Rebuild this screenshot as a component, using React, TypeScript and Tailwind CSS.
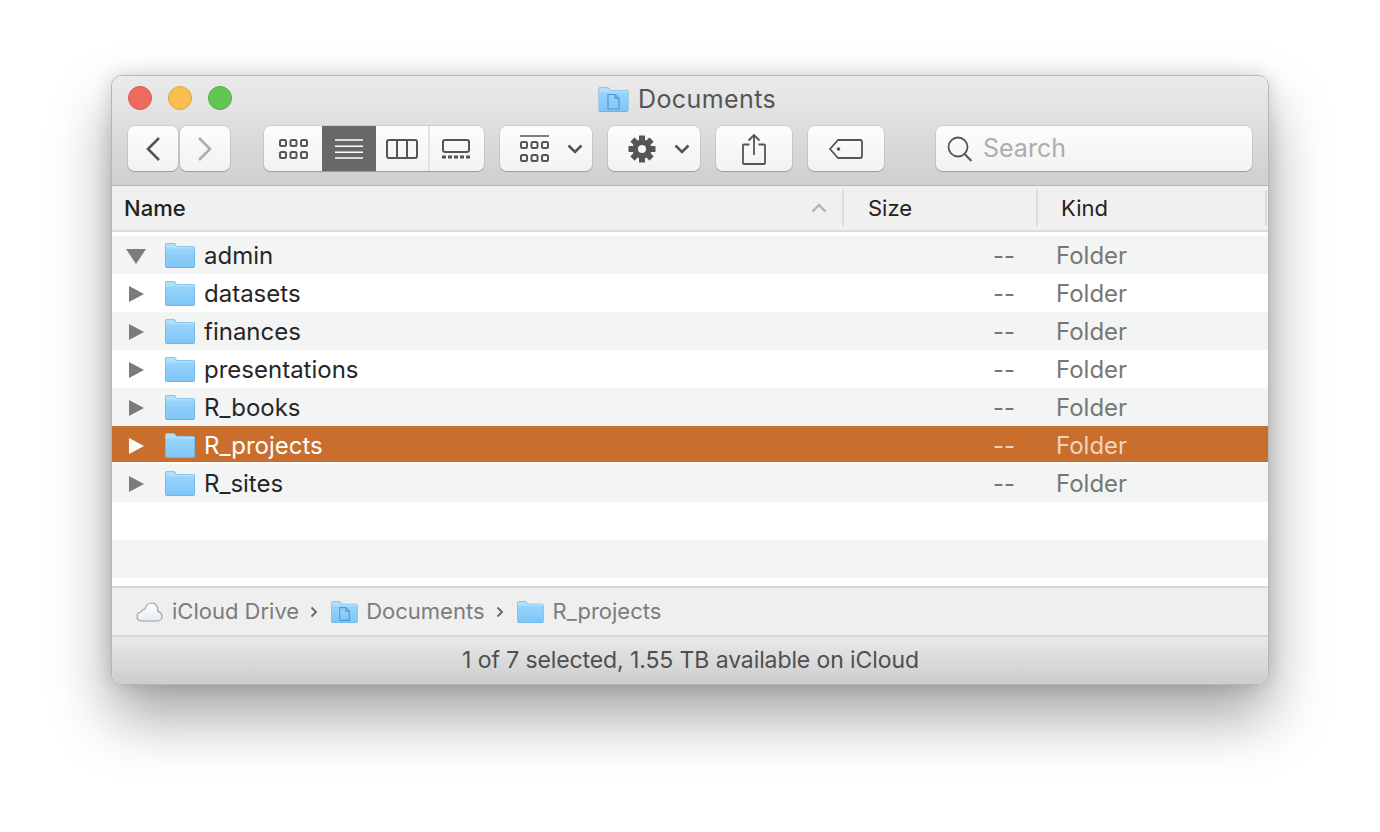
import React from "react";

const rows = [
  { name: "admin", open: true },
  { name: "datasets" },
  { name: "finances" },
  { name: "presentations" },
  { name: "R_books" },
  { name: "R_projects", selected: true },
  { name: "R_sites" },
];

function Folder({ doc = false, className = "w-[30px] h-[25px]" }: { doc?: boolean; className?: string }) {
  const id = doc ? "fd" : "fp";
  return (
    <svg viewBox="0 0 30 25" className={className}>
      <defs>
        <linearGradient id={id} x1="0" y1="0" x2="0" y2="1">
          <stop offset="0" stopColor="#97d4fb" />
          <stop offset="1" stopColor="#7ec5f7" />
        </linearGradient>
      </defs>
      <path d="M0 2.2C0 .9.8 0 2 0h6.2c1 0 1.6.4 2.2 1.1L11.8 3H28c1.2 0 2 .8 2 2v18c0 1.2-.8 2-2 2H2c-1.2 0-2-.8-2-2z" fill="#68aee0" />
      <path d="M.6 2.2C.6 1.2 1.2.6 2 .6h6.2c.8 0 1.3.3 1.8.9L11.5 3.6H28c.9 0 1.4.5 1.4 1.4v1H.6z" fill="#aedffb" />
      <path d="M.6 5.6h28.8V23c0 .9-.5 1.3-1.4 1.3H2c-.9 0-1.4-.4-1.4-1.3z" fill={`url(#${id})`} />
      {doc && (
        <path d="M9.500 7.500h7l4 4V22h-11zM16.500 7.500v4h4" fill="none" stroke="#4f97d6" strokeWidth="1.200" />
      )}
    </svg>
  );
}

function Tri({ open, selected }: { open?: boolean; selected?: boolean }) {
  return open ? (
    <svg viewBox="0 0 20 16" className="w-[20px] h-[16px]">
      <path d="M0 1h20L10 16z" fill="#7b7b7b" />
    </svg>
  ) : (
    <svg viewBox="0 0 16 16" className="w-[16px] h-[16px]">
      <path d="M1 0l15 8-15 8z" fill={selected ? "#ffffff" : "#7b7b7b"} />
    </svg>
  );
}

const btn =
  "h-[45px] flex items-center justify-center rounded-[7px] bg-gradient-to-b from-[#fdfdfd] to-[#f2f2f2] shadow-[0_0_0_1px_rgba(0,0,0,0.07),0_1px_1px_rgba(0,0,0,0.22)]";

const ic = "#555555";

function Chevron() {
  return (
    <svg viewBox="0 0 16 10" className="w-[16px] h-[10px]">
      <path d="M1.500 1.500L8 8l6.500-6.500" fill="none" stroke={ic} strokeWidth="2.600" />
    </svg>
  );
}

function SmallSquares({ y }: { y: number }) {
  return (
    <>
      {[0, 10.500, 21].map((x) => (
        <rect key={x} x={x + 1} y={y} width="6" height="6" rx="1.500" fill="none" stroke={ic} strokeWidth="2" />
      ))}
    </>
  );
}

function Crumb() {
  return (
    <svg viewBox="0 0 8 12" className="w-[8px] h-[12px] ml-[11px]">
      <path d="M1.500 1.500L6 6l-4.500 4.500" fill="none" stroke="#666" strokeWidth="1.800" />
    </svg>
  );
}

export default function App() {
  return (
    <div className="w-[1380px] h-[832px] bg-white pt-[75px] pl-[111px] font-['Inter','Liberation_Sans',sans-serif] overflow-hidden">
      <div className="w-[1158px] h-[610px] rounded-[11px] border border-[#b5b5b5] overflow-hidden flex flex-col shadow-[0_32px_60px_rgba(0,0,0,0.36),0_0_18px_rgba(0,0,0,0.14)] bg-white">
        {/* Title + toolbar */}
        <div className="h-[110px] shrink-0 bg-gradient-to-b from-[#ebebeb] to-[#cfcfcf] border-b border-[#b4b4b4] flex flex-col">
          <div className="relative h-[50px] shrink-0 flex items-start pt-[10px] pl-[16px] gap-[16px]">
            <div className="w-[24px] h-[24px] rounded-full bg-[#ee6a5f] border border-[#d9574d]" />
            <div className="w-[24px] h-[24px] rounded-full bg-[#f6bf4f] border border-[#e0a63b]" />
            <div className="w-[24px] h-[24px] rounded-full bg-[#62c554] border border-[#52ae45]" />
            <div className="absolute left-[486px] top-[9px] flex items-center gap-[9px]">
              <Folder doc className="w-[31px] h-[25px]" />
              <span className="text-[25px] leading-[28px] text-[#555] tracking-[0.4px]">Documents</span>
            </div>
          </div>
          <div className="flex pl-[16px]">
            <button className={`${btn} w-[50px]`}>
              <svg viewBox="0 0 16 26" className="w-[16px] h-[26px]">
                <path d="M14 2L3 13l11 11" fill="none" stroke={ic} strokeWidth="2.600" />
              </svg>
            </button>
            <button className={`${btn} w-[50px] ml-[2px]`}>
              <svg viewBox="0 0 16 26" className="w-[16px] h-[26px]">
                <path d="M2 2l11 11L2 24" fill="none" stroke="#adadad" strokeWidth="2.600" />
              </svg>
            </button>
            <div className={`${btn} w-[220px] ml-[34px] overflow-hidden !justify-start`}>
              <div className="w-[58px] h-full flex items-center justify-center">
                <svg viewBox="0 0 29 20" className="w-[29px] h-[20px]">
                  <SmallSquares y={1} />
                  <SmallSquares y={13} />
                </svg>
              </div>
              <div className="w-[54px] h-full bg-[#686868] flex items-center justify-center">
                <svg viewBox="0 0 28 20" className="w-[28px] h-[20px]">
                  <path d="M0 1h28M0 7.300h28M0 13.300h28M0 19h28" stroke="#fff" strokeWidth="1.600" />
                </svg>
              </div>
              <div className="w-[54px] h-full flex items-center justify-center border-r-2 border-[#e3e3e3]">
                <svg viewBox="0 0 32 20" className="w-[32px] h-[20px]">
                  <rect x="1" y="1" width="30" height="18" rx="2" fill="none" stroke={ic} strokeWidth="2" />
                  <path d="M11 1v18M21 1v18" stroke={ic} strokeWidth="2" />
                </svg>
              </div>
              <div className="flex-1 h-full flex items-center justify-center pr-[2px]">
                <svg viewBox="0 0 28 20" className="w-[28px] h-[20px]">
                  <rect x="1" y="1" width="26" height="12" rx="2" fill="none" stroke={ic} strokeWidth="2" />
                  <path d="M0 18h4M6 18h4M12 18h4M18 18h4M24 18h4" stroke={ic} strokeWidth="3" />
                </svg>
              </div>
            </div>
            <button className={`${btn} w-[92px] ml-[16px] gap-[18px] pl-[10px]`}>
              <svg viewBox="0 0 29 28" className="w-[29px] h-[28px]">
                <path d="M0 1h29" stroke={ic} strokeWidth="1.600" />
                <SmallSquares y={7} />
                <SmallSquares y={20} />
              </svg>
              <Chevron />
            </button>
            <button className={`${btn} w-[92px] ml-[16px] gap-[18px] pl-[10px]`}>
              <svg viewBox="0 0 28 28" className="w-[28px] h-[28px]">
                <g fill={ic}>
                  <circle cx="14" cy="14" r="9.500" />
                  {[0, 45, 90, 135, 180, 225, 270, 315].map((a) => (
                    <rect key={a} x="11" y="0.500" width="6" height="6" rx="0.500" transform={`rotate(${a} 14 14)`} />
                  ))}
                </g>
                <circle cx="14" cy="14" r="4" fill="#f8f8f8" />
              </svg>
              <Chevron />
            </button>
            <button className={`${btn} w-[76px] ml-[16px]`}>
              <svg viewBox="0 0 24 32" className="w-[24px] h-[32px]">
                <path d="M7.500 11.500H2a1 1 0 0 0-1 1V30a1 1 0 0 0 1 1h20a1 1 0 0 0 1-1V12.500a1 1 0 0 0-1-1h-5.500" fill="none" stroke={ic} strokeWidth="1.800" />
                <path d="M12 22V2M6.500 7.500L12 2l5.500 5.500" fill="none" stroke={ic} strokeWidth="1.800" />
              </svg>
            </button>
            <button className={`${btn} w-[76px] ml-[16px]`}>
              <svg viewBox="0 0 34 20" className="w-[34px] h-[20px]">
                <path d="M9 1h22a2 2 0 0 1 2 2v14a2 2 0 0 1-2 2H9l-8-9z" fill="none" stroke={ic} strokeWidth="1.800" strokeLinejoin="round" />
                <circle cx="9.500" cy="10" r="1.800" fill={ic} />
              </svg>
            </button>
            <div className={`${btn} w-[316px] ml-[52px] !justify-start pl-[11px] gap-[10px]`}>
              <svg viewBox="0 0 26 26" className="w-[26px] h-[26px]">
                <circle cx="11" cy="11" r="9.500" fill="none" stroke={ic} strokeWidth="1.800" />
                <path d="M17.500 18l7 7" stroke={ic} strokeWidth="2" />
              </svg>
              <span className="text-[25px] text-[#adadad]">Search</span>
            </div>
          </div>
        </div>

        {/* Column header */}
        <div className="h-[46px] shrink-0 bg-[#f0f0f0] border-b-2 border-[#dcdcdc] flex items-center text-[22px] text-[#222] font-medium">
          <div className="w-[730px] pl-[12px] flex items-center justify-between pr-[15px] h-[36px]">
            <span>Name</span>
            <svg viewBox="0 0 16 10" className="w-[16px] h-[10px]">
              <path d="M1.500 8.500L8 2l6.500 6.500" fill="none" stroke="#b0b0b0" strokeWidth="2.200" />
            </svg>
          </div>
          <div className="w-[194px] h-[36px] border-l-2 border-[#dcdcdc] pl-[24px] flex items-center font-normal">Size</div>
          <div className="flex-1 h-[36px] border-l-2 border-[#dcdcdc] pl-[23px] flex items-center font-normal">Kind</div>
          <div className="w-[2px] h-[36px] bg-[#dcdcdc] mr-[1px]" />
        </div>

        {/* List */}
        <div className="flex-1 bg-white pt-[4px] flex flex-col">
          {rows.map((r, i) => (
            <div
              key={r.name}
              className={`h-[38px] shrink-0 ${r.selected ? "pt-[3px] border-b-2 border-white bg-[#c96e2d]" : i % 2 === 0 ? "pt-[1px] bg-[#f3f5f5]" : "pt-[1px] bg-white"} flex items-center`}
            >
              <div className={`w-[53px] flex justify-center ${r.open ? "pr-[5px]" : "pr-[5px]"}`}>
                <Tri open={r.open} selected={r.selected} />
              </div>
              <Folder />
              <span className={`ml-[9px] w-[669px] text-[24px] leading-[30px] ${r.selected ? "text-white" : "text-[#262626]"}`}>{r.name}</span>
              <span className={`w-[142px] text-right text-[24px] leading-[30px] ${r.selected ? "text-[#f0d3bb]" : "text-[#777]"}`}>--</span>
              <span className={`ml-[41px] text-[24px] leading-[30px] ${r.selected ? "text-[#f0d3bb]" : "text-[#777]"}`}>Folder</span>
            </div>
          ))}
          <div className="h-[38px] shrink-0 bg-white" />
          <div className="h-[38px] shrink-0 bg-[#f3f5f5]" />
        </div>

        {/* Path bar */}
        <div className="h-[51px] shrink-0 bg-[#efefef] border-y-2 border-[#d8d8d8] flex items-center pl-[24px] text-[22px] text-[#7c7c7c]">
          <svg viewBox="0 0 27 20" className="w-[27px] h-[20px]">
            <defs>
              <linearGradient id="cl" x1="0" y1="0" x2="0" y2="1">
                <stop offset="0" stopColor="#ffffff" />
                <stop offset="1" stopColor="#e6ecf2" />
              </linearGradient>
            </defs>
            <path d="M6 19C2.800 19 1 16.900 1 14.500 1 12 2.800 10.200 5.200 10 5.500 8.200 7 7 8.800 7.300 10 3.200 12.800 1 15.500 1c3.700 0 6.300 3 6.300 6.500 0 .7-.1 1.300-.2 1.800C24.200 10 26 12 26 14.500 26 17 24 19 21.500 19z" fill="url(#cl)" stroke="#a0a0a0" strokeWidth="1.200" />
          </svg>
          <span className="ml-[9px]">iCloud Drive</span>
          <Crumb />
          <Folder doc className="w-[27px] h-[22px] ml-[13px]" />
          <span className="ml-[8px]">Documents</span>
          <Crumb />
          <Folder className="w-[27px] h-[22px] ml-[13px]" />
          <span className="ml-[9px]">R_projects</span>
        </div>

        {/* Status bar */}
        <div className="h-[47px] shrink-0 pl-[1px] bg-gradient-to-b from-[#e9e9e9] to-[#cdcdcd] flex items-center justify-center text-[23px] tracking-[-0.1px] text-[#4f4f4f]">
          1 of 7 selected, 1.55 TB available on iCloud
        </div>
      </div>
    </div>
  );
}
